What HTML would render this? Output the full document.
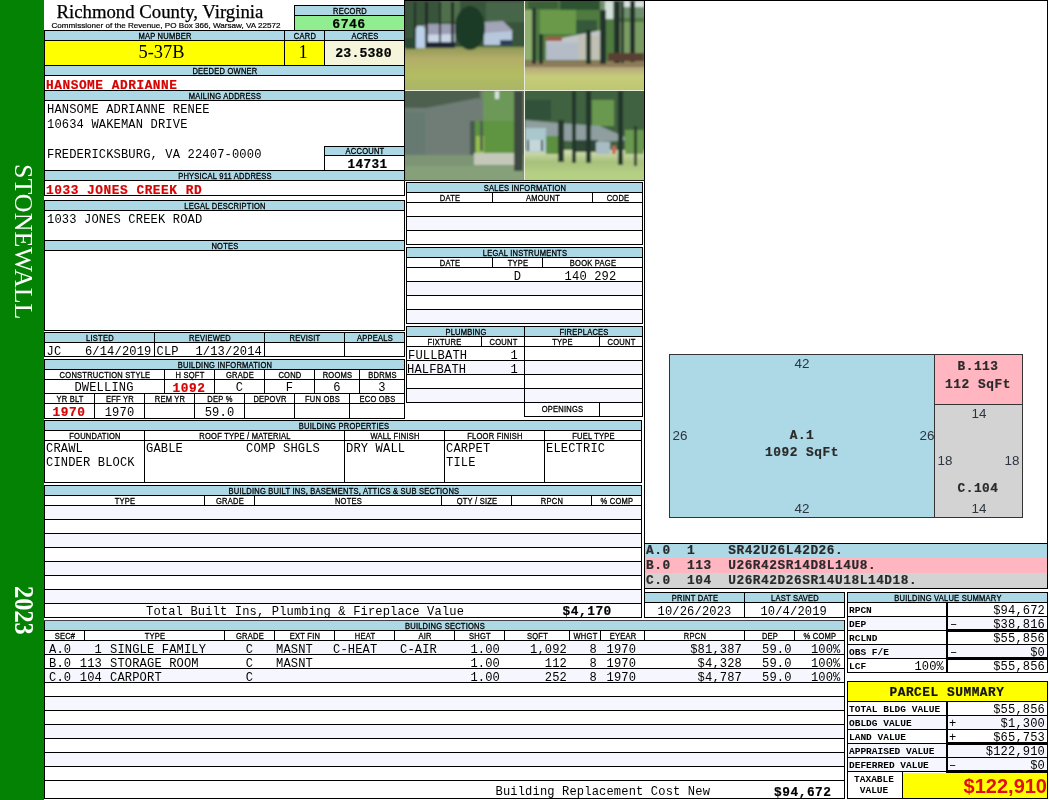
<!DOCTYPE html>
<html lang="en"><head><meta charset="utf-8"><title>Richmond County, Virginia - Property Record 6746</title>
<style>
html,body{margin:0;padding:0;background:#fff;}
#pg{position:relative;width:1050px;height:800px;overflow:hidden;background:#fff;color:#000;will-change:transform;}
.r{position:absolute;}
.t{position:absolute;white-space:nowrap;}
.mono{font-family:"Liberation Mono","DejaVu Sans Mono",monospace;}
.sans{font-family:"Liberation Sans","DejaVu Sans",sans-serif;}
.serif{font-family:"Liberation Serif","DejaVu Serif",serif;}
.vt{writing-mode:vertical-rl;font-family:"Liberation Serif","DejaVu Serif",serif;color:#fff;line-height:24px;width:24px;white-space:nowrap;}
</style></head>
<body><div id="pg">
<div class="r" style="left:0px;top:0px;width:44px;height:800px;background:#038203"></div>
<div class="r" style="left:44px;top:30px;width:1px;height:166px;background:#000"></div>
<div class="r" style="left:44px;top:200px;width:1px;height:131px;background:#000"></div>
<div class="r" style="left:44px;top:332px;width:1px;height:25px;background:#000"></div>
<div class="r" style="left:44px;top:359px;width:1px;height:60px;background:#000"></div>
<div class="r" style="left:44px;top:420px;width:1px;height:63px;background:#000"></div>
<div class="r" style="left:44px;top:485px;width:1px;height:133px;background:#000"></div>
<div class="r" style="left:44px;top:620px;width:1px;height:179px;background:#000"></div>
<div class="t vt" style="left:11px;top:163.5px;font-size:26px;">STONEWALL</div>
<div class="t vt" style="left:11px;top:586px;font-size:24.4px;font-weight:bold;transform:scaleX(1.1);transform-origin:4px 0;">2023</div>
<div class="t serif" style="top:-0.13px;font-size:18.75px;line-height:24px;height:24px;left:56.5px;-webkit-text-stroke:.25px #000;">Richmond County, Virginia</div>
<div class="t sans" style="top:19.89px;font-size:8.1px;line-height:11px;height:11px;left:51.5px;letter-spacing:0px;-webkit-text-stroke:.2px #000;">Commissioner of the Revenue, PO Box 366, Warsaw, VA 22572</div>
<div class="r" style="left:295px;top:6px;width:109px;height:9px;background:#add8e6"></div>
<div class="r" style="left:295px;top:16px;width:109px;height:14px;background:#90ee90"></div>
<div class="r" style="left:294px;top:5px;width:111px;height:1px;background:#000"></div>
<div class="r" style="left:294px;top:15px;width:111px;height:1px;background:#000"></div>
<div class="r" style="left:44px;top:30px;width:361px;height:1px;background:#000"></div>
<div class="r" style="left:294px;top:5px;width:1px;height:26px;background:#000"></div>
<div class="r" style="left:404px;top:0px;width:1px;height:181px;background:#000"></div>
<div class="t sans" style="top:5.69px;font-size:8.4px;line-height:11px;height:11px;left:274.5px;width:150px;text-align:center;letter-spacing:0.25px;transform:scaleX(.9);-webkit-text-stroke:.3px #000;">RECORD</div>
<div class="t mono" style="top:16.18px;font-size:13.2px;line-height:17px;height:17px;left:149.0px;width:400px;text-align:center;font-weight:bold;-webkit-text-stroke:.2px currentColor;letter-spacing:0.4px;">6746</div>
<div class="r" style="left:45px;top:31px;width:359px;height:9px;background:#add8e6"></div>
<div class="r" style="left:44px;top:40px;width:361px;height:1px;background:#000"></div>
<div class="r" style="left:45px;top:41px;width:279px;height:24px;background:#ffff00"></div>
<div class="r" style="left:325px;top:41px;width:79px;height:24px;background:#f5f5dc"></div>
<div class="r" style="left:44px;top:65px;width:361px;height:1px;background:#000"></div>
<div class="r" style="left:284px;top:30px;width:1px;height:36px;background:#000"></div>
<div class="r" style="left:324px;top:30px;width:1px;height:36px;background:#000"></div>
<div class="t sans" style="top:30.69px;font-size:8.4px;line-height:11px;height:11px;left:24.5px;width:280px;text-align:center;letter-spacing:0.25px;transform:scaleX(.9);-webkit-text-stroke:.3px #000;">MAP NUMBER</div>
<div class="t sans" style="top:30.69px;font-size:8.4px;line-height:11px;height:11px;left:264.5px;width:80px;text-align:center;letter-spacing:0.25px;transform:scaleX(.9);-webkit-text-stroke:.3px #000;">CARD</div>
<div class="t sans" style="top:30.69px;font-size:8.4px;line-height:11px;height:11px;left:304.5px;width:120px;text-align:center;letter-spacing:0.25px;transform:scaleX(.9);-webkit-text-stroke:.3px #000;">ACRES</div>
<div class="t serif" style="top:39.99px;font-size:18.4px;line-height:24px;height:24px;left:-38.5px;width:400px;text-align:center;">5-37B</div>
<div class="t serif" style="top:39.99px;font-size:18.4px;line-height:24px;height:24px;left:103.0px;width:400px;text-align:center;">1</div>
<div class="t mono" style="top:44.78px;font-size:13.2px;line-height:17px;height:17px;left:163.5px;width:400px;text-align:center;font-weight:bold;-webkit-text-stroke:.2px currentColor;letter-spacing:0.15px;">23.5380</div>
<div class="r" style="left:45px;top:66px;width:359px;height:9px;background:#add8e6"></div>
<div class="r" style="left:44px;top:75px;width:361px;height:1px;background:#000"></div>
<div class="r" style="left:44px;top:90px;width:361px;height:1px;background:#000"></div>
<div class="t sans" style="top:65.69px;font-size:8.4px;line-height:11px;height:11px;left:24.5px;width:400px;text-align:center;letter-spacing:0.25px;transform:scaleX(.9);-webkit-text-stroke:.3px #000;">DEEDED OWNER</div>
<div class="t mono" style="top:76.69px;font-size:12.8px;line-height:17px;height:17px;left:46px;font-weight:bold;-webkit-text-stroke:.2px currentColor;color:#d40505;letter-spacing:0.54px;">HANSOME ADRIANNE</div>
<div class="r" style="left:45px;top:91px;width:359px;height:9px;background:#add8e6"></div>
<div class="r" style="left:44px;top:100px;width:361px;height:1px;background:#000"></div>
<div class="t sans" style="top:90.69px;font-size:8.4px;line-height:11px;height:11px;left:24.5px;width:400px;text-align:center;letter-spacing:0.25px;transform:scaleX(.9);-webkit-text-stroke:.3px #000;">MAILING ADDRESS</div>
<div class="t mono" style="top:102.38px;font-size:12.1px;line-height:16px;height:16px;left:47px;letter-spacing:0.14px;">HANSOME ADRIANNE RENEE</div>
<div class="t mono" style="top:117.38px;font-size:12.1px;line-height:16px;height:16px;left:47px;letter-spacing:0.14px;">10634 WAKEMAN DRIVE</div>
<div class="t mono" style="top:147.38px;font-size:12.1px;line-height:16px;height:16px;left:47px;letter-spacing:0.14px;">FREDERICKSBURG, VA 22407-0000</div>
<div class="r" style="left:325px;top:147px;width:79px;height:8px;background:#add8e6"></div>
<div class="r" style="left:324px;top:146px;width:81px;height:1px;background:#000"></div>
<div class="r" style="left:324px;top:155px;width:81px;height:1px;background:#000"></div>
<div class="r" style="left:324px;top:146px;width:1px;height:25px;background:#000"></div>
<div class="t sans" style="top:146.19px;font-size:8.4px;line-height:11px;height:11px;left:304.5px;width:120px;text-align:center;letter-spacing:0.25px;transform:scaleX(.9);-webkit-text-stroke:.3px #000;">ACCOUNT</div>
<div class="t mono" style="top:156.12px;font-size:12.7px;line-height:17px;height:17px;left:167.5px;width:400px;text-align:center;font-weight:bold;-webkit-text-stroke:.2px currentColor;letter-spacing:0.4px;">14731</div>
<div class="r" style="left:44px;top:170px;width:361px;height:1px;background:#000"></div>
<div class="r" style="left:45px;top:171px;width:359px;height:9px;background:#add8e6"></div>
<div class="r" style="left:44px;top:180px;width:361px;height:1px;background:#000"></div>
<div class="r" style="left:44px;top:195px;width:361px;height:1px;background:#000"></div>
<div class="t sans" style="top:170.69px;font-size:8.4px;line-height:11px;height:11px;left:24.5px;width:400px;text-align:center;letter-spacing:0.25px;transform:scaleX(.9);-webkit-text-stroke:.3px #000;">PHYSICAL 911 ADDRESS</div>
<div class="t mono" style="top:181.69px;font-size:12.8px;line-height:17px;height:17px;left:46px;font-weight:bold;-webkit-text-stroke:.2px currentColor;color:#d40505;letter-spacing:0.54px;">1033 JONES CREEK RD</div>
<div class="r" style="left:404px;top:180px;width:1px;height:16px;background:#000"></div>
<div class="r" style="left:44px;top:200px;width:361px;height:1px;background:#000"></div>
<div class="r" style="left:45px;top:201px;width:359px;height:9px;background:#add8e6"></div>
<div class="r" style="left:44px;top:210px;width:361px;height:1px;background:#000"></div>
<div class="t sans" style="top:200.69px;font-size:8.4px;line-height:11px;height:11px;left:24.5px;width:400px;text-align:center;letter-spacing:0.25px;transform:scaleX(.9);-webkit-text-stroke:.3px #000;">LEGAL DESCRIPTION</div>
<div class="t mono" style="top:211.88px;font-size:12.1px;line-height:16px;height:16px;left:47px;letter-spacing:0.14px;">1033 JONES CREEK ROAD</div>
<div class="r" style="left:44px;top:240px;width:361px;height:1px;background:#000"></div>
<div class="r" style="left:45px;top:241px;width:359px;height:9px;background:#add8e6"></div>
<div class="r" style="left:44px;top:250px;width:361px;height:1px;background:#000"></div>
<div class="r" style="left:44px;top:330px;width:361px;height:1px;background:#000"></div>
<div class="t sans" style="top:240.69px;font-size:8.4px;line-height:11px;height:11px;left:24.5px;width:400px;text-align:center;letter-spacing:0.25px;transform:scaleX(.9);-webkit-text-stroke:.3px #000;">NOTES</div>
<div class="r" style="left:404px;top:200px;width:1px;height:131px;background:#000"></div>
<div class="r" style="left:44px;top:332px;width:361px;height:1px;background:#000"></div>
<div class="r" style="left:45px;top:333px;width:359px;height:9px;background:#add8e6"></div>
<div class="r" style="left:44px;top:342px;width:361px;height:1px;background:#000"></div>
<div class="r" style="left:44px;top:356px;width:361px;height:1px;background:#000"></div>
<div class="r" style="left:154px;top:332px;width:1px;height:25px;background:#000"></div>
<div class="r" style="left:264px;top:332px;width:1px;height:25px;background:#000"></div>
<div class="r" style="left:344px;top:332px;width:1px;height:25px;background:#000"></div>
<div class="r" style="left:404px;top:332px;width:1px;height:25px;background:#000"></div>
<div class="t sans" style="top:332.69px;font-size:8.4px;line-height:11px;height:11px;left:24.5px;width:150px;text-align:center;letter-spacing:0.25px;transform:scaleX(.9);-webkit-text-stroke:.3px #000;">LISTED</div>
<div class="t sans" style="top:332.69px;font-size:8.4px;line-height:11px;height:11px;left:134.5px;width:150px;text-align:center;letter-spacing:0.25px;transform:scaleX(.9);-webkit-text-stroke:.3px #000;">REVIEWED</div>
<div class="t sans" style="top:332.69px;font-size:8.4px;line-height:11px;height:11px;left:244.5px;width:120px;text-align:center;letter-spacing:0.25px;transform:scaleX(.9);-webkit-text-stroke:.3px #000;">REVISIT</div>
<div class="t sans" style="top:332.69px;font-size:8.4px;line-height:11px;height:11px;left:324.5px;width:100px;text-align:center;letter-spacing:0.25px;transform:scaleX(.9);-webkit-text-stroke:.3px #000;">APPEALS</div>
<div class="t mono" style="top:343.68px;font-size:12.1px;line-height:16px;height:16px;left:46.5px;letter-spacing:0.14px;">JC</div>
<div class="t mono" style="top:343.68px;font-size:12.1px;line-height:16px;height:16px;left:-248.5px;width:400px;text-align:right;letter-spacing:0.14px;">6/14/2019</div>
<div class="t mono" style="top:343.68px;font-size:12.1px;line-height:16px;height:16px;left:156.5px;letter-spacing:0.14px;">CLP</div>
<div class="t mono" style="top:343.68px;font-size:12.1px;line-height:16px;height:16px;left:-138px;width:400px;text-align:right;letter-spacing:0.14px;">1/13/2014</div>
<div class="r" style="left:44px;top:359px;width:361px;height:1px;background:#000"></div>
<div class="r" style="left:45px;top:360px;width:359px;height:9px;background:#add8e6"></div>
<div class="r" style="left:44px;top:369px;width:361px;height:1px;background:#000"></div>
<div class="r" style="left:44px;top:379px;width:361px;height:1px;background:#000"></div>
<div class="r" style="left:44px;top:393px;width:361px;height:1px;background:#000"></div>
<div class="r" style="left:44px;top:403px;width:361px;height:1px;background:#000"></div>
<div class="r" style="left:44px;top:418px;width:361px;height:1px;background:#000"></div>
<div class="r" style="left:404px;top:359px;width:1px;height:60px;background:#000"></div>
<div class="t sans" style="top:359.69px;font-size:8.4px;line-height:11px;height:11px;left:24.5px;width:400px;text-align:center;letter-spacing:0.25px;transform:scaleX(.9);-webkit-text-stroke:.3px #000;">BUILDING INFORMATION</div>
<div class="r" style="left:164px;top:369px;width:1px;height:25px;background:#000"></div>
<div class="r" style="left:214px;top:369px;width:1px;height:25px;background:#000"></div>
<div class="r" style="left:264px;top:369px;width:1px;height:25px;background:#000"></div>
<div class="r" style="left:314px;top:369px;width:1px;height:25px;background:#000"></div>
<div class="r" style="left:359px;top:369px;width:1px;height:25px;background:#000"></div>
<div class="t sans" style="top:369.69px;font-size:8.4px;line-height:11px;height:11px;left:24.5px;width:160px;text-align:center;letter-spacing:0.25px;transform:scaleX(.9);-webkit-text-stroke:.3px #000;">CONSTRUCTION STYLE</div>
<div class="t sans" style="top:369.69px;font-size:8.4px;line-height:11px;height:11px;left:144.5px;width:90px;text-align:center;letter-spacing:0.25px;transform:scaleX(.9);-webkit-text-stroke:.3px #000;">H SQFT</div>
<div class="t sans" style="top:369.69px;font-size:8.4px;line-height:11px;height:11px;left:194.5px;width:90px;text-align:center;letter-spacing:0.25px;transform:scaleX(.9);-webkit-text-stroke:.3px #000;">GRADE</div>
<div class="t sans" style="top:369.69px;font-size:8.4px;line-height:11px;height:11px;left:244.5px;width:90px;text-align:center;letter-spacing:0.25px;transform:scaleX(.9);-webkit-text-stroke:.3px #000;">COND</div>
<div class="t sans" style="top:369.69px;font-size:8.4px;line-height:11px;height:11px;left:294.5px;width:85px;text-align:center;letter-spacing:0.25px;transform:scaleX(.9);-webkit-text-stroke:.3px #000;">ROOMS</div>
<div class="t sans" style="top:369.69px;font-size:8.4px;line-height:11px;height:11px;left:339.5px;width:85px;text-align:center;letter-spacing:0.25px;transform:scaleX(.9);-webkit-text-stroke:.3px #000;">BDRMS</div>
<div class="t mono" style="top:380.38px;font-size:12.1px;line-height:16px;height:16px;left:-96.0px;width:400px;text-align:center;letter-spacing:0.14px;">DWELLING</div>
<div class="t mono" style="top:379.69px;font-size:12.8px;line-height:17px;height:17px;left:-11.0px;width:400px;text-align:center;font-weight:bold;-webkit-text-stroke:.2px currentColor;color:#d40505;letter-spacing:0.54px;">1092</div>
<div class="t mono" style="top:380.38px;font-size:12.1px;line-height:16px;height:16px;left:39.5px;width:400px;text-align:center;letter-spacing:0.14px;">C</div>
<div class="t mono" style="top:380.38px;font-size:12.1px;line-height:16px;height:16px;left:89.5px;width:400px;text-align:center;letter-spacing:0.14px;">F</div>
<div class="t mono" style="top:380.38px;font-size:12.1px;line-height:16px;height:16px;left:137.0px;width:400px;text-align:center;letter-spacing:0.14px;">6</div>
<div class="t mono" style="top:380.38px;font-size:12.1px;line-height:16px;height:16px;left:182.0px;width:400px;text-align:center;letter-spacing:0.14px;">3</div>
<div class="r" style="left:94px;top:393px;width:1px;height:26px;background:#000"></div>
<div class="r" style="left:144px;top:393px;width:1px;height:26px;background:#000"></div>
<div class="r" style="left:194px;top:393px;width:1px;height:26px;background:#000"></div>
<div class="r" style="left:244px;top:393px;width:1px;height:26px;background:#000"></div>
<div class="r" style="left:294px;top:393px;width:1px;height:26px;background:#000"></div>
<div class="r" style="left:349px;top:393px;width:1px;height:26px;background:#000"></div>
<div class="t sans" style="top:393.69px;font-size:8.4px;line-height:11px;height:11px;left:24.5px;width:90px;text-align:center;letter-spacing:0.25px;transform:scaleX(.9);-webkit-text-stroke:.3px #000;">YR BLT</div>
<div class="t sans" style="top:393.69px;font-size:8.4px;line-height:11px;height:11px;left:74.5px;width:90px;text-align:center;letter-spacing:0.25px;transform:scaleX(.9);-webkit-text-stroke:.3px #000;">EFF YR</div>
<div class="t sans" style="top:393.69px;font-size:8.4px;line-height:11px;height:11px;left:124.5px;width:90px;text-align:center;letter-spacing:0.25px;transform:scaleX(.9);-webkit-text-stroke:.3px #000;">REM YR</div>
<div class="t sans" style="top:393.69px;font-size:8.4px;line-height:11px;height:11px;left:174.5px;width:90px;text-align:center;letter-spacing:0.25px;transform:scaleX(.9);-webkit-text-stroke:.3px #000;">DEP %</div>
<div class="t sans" style="top:393.69px;font-size:8.4px;line-height:11px;height:11px;left:224.5px;width:90px;text-align:center;letter-spacing:0.25px;transform:scaleX(.9);-webkit-text-stroke:.3px #000;">DEPOVR</div>
<div class="t sans" style="top:393.69px;font-size:8.4px;line-height:11px;height:11px;left:274.5px;width:95px;text-align:center;letter-spacing:0.25px;transform:scaleX(.9);-webkit-text-stroke:.3px #000;">FUN OBS</div>
<div class="t sans" style="top:393.69px;font-size:8.4px;line-height:11px;height:11px;left:329.5px;width:95px;text-align:center;letter-spacing:0.25px;transform:scaleX(.9);-webkit-text-stroke:.3px #000;">ECO OBS</div>
<div class="t mono" style="top:404.19px;font-size:12.8px;line-height:17px;height:17px;left:-131.0px;width:400px;text-align:center;font-weight:bold;-webkit-text-stroke:.2px currentColor;color:#d40505;letter-spacing:0.54px;">1970</div>
<div class="t mono" style="top:404.88px;font-size:12.1px;line-height:16px;height:16px;left:-80.5px;width:400px;text-align:center;letter-spacing:0.14px;">1970</div>
<div class="t mono" style="top:404.88px;font-size:12.1px;line-height:16px;height:16px;left:19.5px;width:400px;text-align:center;letter-spacing:0.14px;">59.0</div>
<div class="r" style="left:44px;top:420px;width:598px;height:1px;background:#000"></div>
<div class="r" style="left:45px;top:421px;width:596px;height:9px;background:#add8e6"></div>
<div class="r" style="left:44px;top:430px;width:598px;height:1px;background:#000"></div>
<div class="r" style="left:44px;top:440px;width:598px;height:1px;background:#000"></div>
<div class="r" style="left:44px;top:482px;width:598px;height:1px;background:#000"></div>
<div class="r" style="left:144px;top:430px;width:1px;height:53px;background:#000"></div>
<div class="r" style="left:344px;top:430px;width:1px;height:53px;background:#000"></div>
<div class="r" style="left:444px;top:430px;width:1px;height:53px;background:#000"></div>
<div class="r" style="left:544px;top:430px;width:1px;height:53px;background:#000"></div>
<div class="r" style="left:641px;top:420px;width:1px;height:63px;background:#000"></div>
<div class="t sans" style="top:421.19px;font-size:8.4px;line-height:11px;height:11px;left:24.5px;width:638px;text-align:center;letter-spacing:0.25px;transform:scaleX(.9);-webkit-text-stroke:.3px #000;">BUILDING PROPERTIES</div>
<div class="t sans" style="top:430.69px;font-size:8.4px;line-height:11px;height:11px;left:24.5px;width:140px;text-align:center;letter-spacing:0.25px;transform:scaleX(.9);-webkit-text-stroke:.3px #000;">FOUNDATION</div>
<div class="t sans" style="top:430.69px;font-size:8.4px;line-height:11px;height:11px;left:124.5px;width:240px;text-align:center;letter-spacing:0.25px;transform:scaleX(.9);-webkit-text-stroke:.3px #000;">ROOF TYPE / MATERIAL</div>
<div class="t sans" style="top:430.69px;font-size:8.4px;line-height:11px;height:11px;left:324.5px;width:140px;text-align:center;letter-spacing:0.25px;transform:scaleX(.9);-webkit-text-stroke:.3px #000;">WALL FINISH</div>
<div class="t sans" style="top:430.69px;font-size:8.4px;line-height:11px;height:11px;left:424.5px;width:140px;text-align:center;letter-spacing:0.25px;transform:scaleX(.9);-webkit-text-stroke:.3px #000;">FLOOR FINISH</div>
<div class="t sans" style="top:430.69px;font-size:8.4px;line-height:11px;height:11px;left:524.5px;width:137px;text-align:center;letter-spacing:0.25px;transform:scaleX(.9);-webkit-text-stroke:.3px #000;">FUEL TYPE</div>
<div class="t mono" style="top:440.88px;font-size:12.1px;line-height:16px;height:16px;left:46px;letter-spacing:0.14px;">CRAWL</div>
<div class="t mono" style="top:454.88px;font-size:12.1px;line-height:16px;height:16px;left:46px;letter-spacing:0.14px;">CINDER BLOCK</div>
<div class="t mono" style="top:440.88px;font-size:12.1px;line-height:16px;height:16px;left:146px;letter-spacing:0.14px;">GABLE</div>
<div class="t mono" style="top:440.88px;font-size:12.1px;line-height:16px;height:16px;left:246px;letter-spacing:0.14px;">COMP SHGLS</div>
<div class="t mono" style="top:440.88px;font-size:12.1px;line-height:16px;height:16px;left:346px;letter-spacing:0.14px;">DRY WALL</div>
<div class="t mono" style="top:440.88px;font-size:12.1px;line-height:16px;height:16px;left:446px;letter-spacing:0.14px;">CARPET</div>
<div class="t mono" style="top:454.88px;font-size:12.1px;line-height:16px;height:16px;left:446px;letter-spacing:0.14px;">TILE</div>
<div class="t mono" style="top:440.88px;font-size:12.1px;line-height:16px;height:16px;left:546px;letter-spacing:0.14px;">ELECTRIC</div>
<div class="r" style="left:44px;top:485px;width:598px;height:1px;background:#000"></div>
<div class="r" style="left:45px;top:486px;width:596px;height:9px;background:#add8e6"></div>
<div class="r" style="left:44px;top:495px;width:598px;height:1px;background:#000"></div>
<div class="r" style="left:44px;top:505px;width:598px;height:1px;background:#000"></div>
<div class="t sans" style="top:485.69px;font-size:8.4px;line-height:11px;height:11px;left:24.5px;width:638px;text-align:center;letter-spacing:0.25px;transform:scaleX(.9);-webkit-text-stroke:.3px #000;">BUILDING BUILT INS, BASEMENTS, ATTICS &amp; SUB SECTIONS</div>
<div class="r" style="left:204px;top:495px;width:1px;height:11px;background:#000"></div>
<div class="r" style="left:254px;top:495px;width:1px;height:11px;background:#000"></div>
<div class="r" style="left:441px;top:495px;width:1px;height:11px;background:#000"></div>
<div class="r" style="left:511px;top:495px;width:1px;height:11px;background:#000"></div>
<div class="r" style="left:591px;top:495px;width:1px;height:11px;background:#000"></div>
<div class="t sans" style="top:495.69px;font-size:8.4px;line-height:11px;height:11px;left:24.5px;width:200px;text-align:center;letter-spacing:0.25px;transform:scaleX(.9);-webkit-text-stroke:.3px #000;">TYPE</div>
<div class="t sans" style="top:495.69px;font-size:8.4px;line-height:11px;height:11px;left:184.5px;width:90px;text-align:center;letter-spacing:0.25px;transform:scaleX(.9);-webkit-text-stroke:.3px #000;">GRADE</div>
<div class="t sans" style="top:495.69px;font-size:8.4px;line-height:11px;height:11px;left:234.5px;width:227px;text-align:center;letter-spacing:0.25px;transform:scaleX(.9);-webkit-text-stroke:.3px #000;">NOTES</div>
<div class="t sans" style="top:495.69px;font-size:8.4px;line-height:11px;height:11px;left:421.5px;width:110px;text-align:center;letter-spacing:0.25px;transform:scaleX(.9);-webkit-text-stroke:.3px #000;">QTY / SIZE</div>
<div class="t sans" style="top:495.69px;font-size:8.4px;line-height:11px;height:11px;left:491.5px;width:120px;text-align:center;letter-spacing:0.25px;transform:scaleX(.9);-webkit-text-stroke:.3px #000;">RPCN</div>
<div class="t sans" style="top:495.69px;font-size:8.4px;line-height:11px;height:11px;left:571.5px;width:90px;text-align:center;letter-spacing:0.25px;transform:scaleX(.9);-webkit-text-stroke:.3px #000;">% COMP</div>
<div class="r" style="left:45px;top:506px;width:596px;height:13px;background:#f6f6fe"></div>
<div class="r" style="left:44px;top:519px;width:598px;height:1px;background:#000"></div>
<div class="r" style="left:44px;top:533px;width:598px;height:1px;background:#000"></div>
<div class="r" style="left:45px;top:534px;width:596px;height:13px;background:#f6f6fe"></div>
<div class="r" style="left:44px;top:547px;width:598px;height:1px;background:#000"></div>
<div class="r" style="left:44px;top:561px;width:598px;height:1px;background:#000"></div>
<div class="r" style="left:45px;top:562px;width:596px;height:13px;background:#f6f6fe"></div>
<div class="r" style="left:44px;top:575px;width:598px;height:1px;background:#000"></div>
<div class="r" style="left:44px;top:589px;width:598px;height:1px;background:#000"></div>
<div class="r" style="left:45px;top:590px;width:596px;height:13px;background:#f6f6fe"></div>
<div class="r" style="left:44px;top:603px;width:598px;height:1px;background:#000"></div>
<div class="r" style="left:44px;top:617px;width:598px;height:1px;background:#000"></div>
<div class="r" style="left:641px;top:485px;width:1px;height:133px;background:#000"></div>
<div class="t mono" style="top:604.18px;font-size:12.1px;line-height:16px;height:16px;left:146px;letter-spacing:0.14px;">Total Built Ins, Plumbing &amp; Fireplace Value</div>
<div class="t mono" style="top:603.29px;font-size:12.8px;line-height:17px;height:17px;left:562.5px;font-weight:bold;-webkit-text-stroke:.2px currentColor;letter-spacing:0.54px;">$4,170</div>
<div class="r" style="left:44px;top:620px;width:801px;height:1px;background:#444"></div>
<div class="r" style="left:45px;top:621px;width:799px;height:9px;background:#add8e6"></div>
<div class="r" style="left:44px;top:630px;width:801px;height:1px;background:#000"></div>
<div class="r" style="left:44px;top:640px;width:801px;height:1px;background:#000"></div>
<div class="t sans" style="top:620.69px;font-size:8.4px;line-height:11px;height:11px;left:24.5px;width:840px;text-align:center;letter-spacing:0.25px;transform:scaleX(.9);-webkit-text-stroke:.3px #000;">BUILDING SECTIONS</div>
<div class="r" style="left:84px;top:630px;width:1px;height:11px;background:#000"></div>
<div class="r" style="left:224px;top:630px;width:1px;height:11px;background:#000"></div>
<div class="r" style="left:274px;top:630px;width:1px;height:11px;background:#000"></div>
<div class="r" style="left:334px;top:630px;width:1px;height:11px;background:#000"></div>
<div class="r" style="left:394px;top:630px;width:1px;height:11px;background:#000"></div>
<div class="r" style="left:454px;top:630px;width:1px;height:11px;background:#000"></div>
<div class="r" style="left:504px;top:630px;width:1px;height:11px;background:#000"></div>
<div class="r" style="left:569px;top:630px;width:1px;height:11px;background:#000"></div>
<div class="r" style="left:600px;top:630px;width:1px;height:11px;background:#000"></div>
<div class="r" style="left:644px;top:630px;width:1px;height:11px;background:#000"></div>
<div class="r" style="left:744px;top:630px;width:1px;height:11px;background:#000"></div>
<div class="r" style="left:794px;top:630px;width:1px;height:11px;background:#000"></div>
<div class="t sans" style="top:630.69px;font-size:8.4px;line-height:11px;height:11px;left:24.5px;width:80px;text-align:center;letter-spacing:0.25px;transform:scaleX(.9);-webkit-text-stroke:.3px #000;">SEC#</div>
<div class="t sans" style="top:630.69px;font-size:8.4px;line-height:11px;height:11px;left:64.5px;width:180px;text-align:center;letter-spacing:0.25px;transform:scaleX(.9);-webkit-text-stroke:.3px #000;">TYPE</div>
<div class="t sans" style="top:630.69px;font-size:8.4px;line-height:11px;height:11px;left:204.5px;width:90px;text-align:center;letter-spacing:0.25px;transform:scaleX(.9);-webkit-text-stroke:.3px #000;">GRADE</div>
<div class="t sans" style="top:630.69px;font-size:8.4px;line-height:11px;height:11px;left:254.5px;width:100px;text-align:center;letter-spacing:0.25px;transform:scaleX(.9);-webkit-text-stroke:.3px #000;">EXT FIN</div>
<div class="t sans" style="top:630.69px;font-size:8.4px;line-height:11px;height:11px;left:314.5px;width:100px;text-align:center;letter-spacing:0.25px;transform:scaleX(.9);-webkit-text-stroke:.3px #000;">HEAT</div>
<div class="t sans" style="top:630.69px;font-size:8.4px;line-height:11px;height:11px;left:374.5px;width:100px;text-align:center;letter-spacing:0.25px;transform:scaleX(.9);-webkit-text-stroke:.3px #000;">AIR</div>
<div class="t sans" style="top:630.69px;font-size:8.4px;line-height:11px;height:11px;left:434.5px;width:90px;text-align:center;letter-spacing:0.25px;transform:scaleX(.9);-webkit-text-stroke:.3px #000;">SHGT</div>
<div class="t sans" style="top:630.69px;font-size:8.4px;line-height:11px;height:11px;left:484.5px;width:105px;text-align:center;letter-spacing:0.25px;transform:scaleX(.9);-webkit-text-stroke:.3px #000;">SQFT</div>
<div class="t sans" style="top:630.69px;font-size:8.4px;line-height:11px;height:11px;left:549.5px;width:71px;text-align:center;letter-spacing:0.25px;transform:scaleX(.9);-webkit-text-stroke:.3px #000;">WHGT</div>
<div class="t sans" style="top:630.69px;font-size:8.4px;line-height:11px;height:11px;left:580.5px;width:84px;text-align:center;letter-spacing:0.25px;transform:scaleX(.9);-webkit-text-stroke:.3px #000;">EYEAR</div>
<div class="t sans" style="top:630.69px;font-size:8.4px;line-height:11px;height:11px;left:624.5px;width:140px;text-align:center;letter-spacing:0.25px;transform:scaleX(.9);-webkit-text-stroke:.3px #000;">RPCN</div>
<div class="t sans" style="top:630.69px;font-size:8.4px;line-height:11px;height:11px;left:724.5px;width:90px;text-align:center;letter-spacing:0.25px;transform:scaleX(.9);-webkit-text-stroke:.3px #000;">DEP</div>
<div class="t sans" style="top:630.69px;font-size:8.4px;line-height:11px;height:11px;left:774.5px;width:90px;text-align:center;letter-spacing:0.25px;transform:scaleX(.9);-webkit-text-stroke:.3px #000;">% COMP</div>
<div class="r" style="left:45px;top:641px;width:799px;height:13px;background:#f6f6fe"></div>
<div class="r" style="left:44px;top:654px;width:801px;height:1px;background:#000"></div>
<div class="r" style="left:44px;top:668px;width:801px;height:1px;background:#000"></div>
<div class="r" style="left:45px;top:669px;width:799px;height:13px;background:#f6f6fe"></div>
<div class="r" style="left:44px;top:682px;width:801px;height:1px;background:#000"></div>
<div class="r" style="left:44px;top:696px;width:801px;height:1px;background:#000"></div>
<div class="r" style="left:45px;top:697px;width:799px;height:13px;background:#f6f6fe"></div>
<div class="r" style="left:44px;top:710px;width:801px;height:1px;background:#000"></div>
<div class="r" style="left:44px;top:724px;width:801px;height:1px;background:#000"></div>
<div class="r" style="left:45px;top:725px;width:799px;height:13px;background:#f6f6fe"></div>
<div class="r" style="left:44px;top:738px;width:801px;height:1px;background:#000"></div>
<div class="r" style="left:44px;top:752px;width:801px;height:1px;background:#000"></div>
<div class="r" style="left:45px;top:753px;width:799px;height:13px;background:#f6f6fe"></div>
<div class="r" style="left:44px;top:766px;width:801px;height:1px;background:#000"></div>
<div class="r" style="left:44px;top:780px;width:801px;height:1px;background:#000"></div>
<div class="r" style="left:44px;top:798px;width:801px;height:1px;background:#000"></div>
<div class="r" style="left:844px;top:620px;width:1px;height:179px;background:#000"></div>
<div class="t mono" style="top:641.68px;font-size:12.1px;line-height:16px;height:16px;left:49px;letter-spacing:0.14px;">A.0</div>
<div class="t mono" style="top:641.68px;font-size:12.1px;line-height:16px;height:16px;left:-298px;width:400px;text-align:right;letter-spacing:0.14px;">1</div>
<div class="t mono" style="top:641.68px;font-size:12.1px;line-height:16px;height:16px;left:110px;letter-spacing:0.14px;">SINGLE FAMILY</div>
<div class="t mono" style="top:641.68px;font-size:12.1px;line-height:16px;height:16px;left:49.5px;width:400px;text-align:center;letter-spacing:0.14px;">C</div>
<div class="t mono" style="top:641.68px;font-size:12.1px;line-height:16px;height:16px;left:276px;letter-spacing:0.14px;">MASNT</div>
<div class="t mono" style="top:641.68px;font-size:12.1px;line-height:16px;height:16px;left:333px;letter-spacing:0.14px;">C-HEAT</div>
<div class="t mono" style="top:641.68px;font-size:12.1px;line-height:16px;height:16px;left:400px;letter-spacing:0.14px;">C-AIR</div>
<div class="t mono" style="top:641.68px;font-size:12.1px;line-height:16px;height:16px;left:100px;width:400px;text-align:right;letter-spacing:0.14px;">1.00</div>
<div class="t mono" style="top:641.68px;font-size:12.1px;line-height:16px;height:16px;left:167px;width:400px;text-align:right;letter-spacing:0.14px;">1,092</div>
<div class="t mono" style="top:641.68px;font-size:12.1px;line-height:16px;height:16px;left:197px;width:400px;text-align:right;letter-spacing:0.14px;">8</div>
<div class="t mono" style="top:641.68px;font-size:12.1px;line-height:16px;height:16px;left:606.5px;letter-spacing:0.14px;">1970</div>
<div class="t mono" style="top:641.68px;font-size:12.1px;line-height:16px;height:16px;left:342px;width:400px;text-align:right;letter-spacing:0.14px;">$81,387</div>
<div class="t mono" style="top:641.68px;font-size:12.1px;line-height:16px;height:16px;left:762px;letter-spacing:0.14px;">59.0</div>
<div class="t mono" style="top:641.68px;font-size:12.1px;line-height:16px;height:16px;left:440.5px;width:400px;text-align:right;letter-spacing:0.14px;">100%</div>
<div class="t mono" style="top:655.68px;font-size:12.1px;line-height:16px;height:16px;left:49px;letter-spacing:0.14px;">B.0</div>
<div class="t mono" style="top:655.68px;font-size:12.1px;line-height:16px;height:16px;left:-298px;width:400px;text-align:right;letter-spacing:0.14px;">113</div>
<div class="t mono" style="top:655.68px;font-size:12.1px;line-height:16px;height:16px;left:110px;letter-spacing:0.14px;">STORAGE ROOM</div>
<div class="t mono" style="top:655.68px;font-size:12.1px;line-height:16px;height:16px;left:49.5px;width:400px;text-align:center;letter-spacing:0.14px;">C</div>
<div class="t mono" style="top:655.68px;font-size:12.1px;line-height:16px;height:16px;left:276px;letter-spacing:0.14px;">MASNT</div>
<div class="t mono" style="top:655.68px;font-size:12.1px;line-height:16px;height:16px;left:333px;letter-spacing:0.14px;"></div>
<div class="t mono" style="top:655.68px;font-size:12.1px;line-height:16px;height:16px;left:400px;letter-spacing:0.14px;"></div>
<div class="t mono" style="top:655.68px;font-size:12.1px;line-height:16px;height:16px;left:100px;width:400px;text-align:right;letter-spacing:0.14px;">1.00</div>
<div class="t mono" style="top:655.68px;font-size:12.1px;line-height:16px;height:16px;left:167px;width:400px;text-align:right;letter-spacing:0.14px;">112</div>
<div class="t mono" style="top:655.68px;font-size:12.1px;line-height:16px;height:16px;left:197px;width:400px;text-align:right;letter-spacing:0.14px;">8</div>
<div class="t mono" style="top:655.68px;font-size:12.1px;line-height:16px;height:16px;left:606.5px;letter-spacing:0.14px;">1970</div>
<div class="t mono" style="top:655.68px;font-size:12.1px;line-height:16px;height:16px;left:342px;width:400px;text-align:right;letter-spacing:0.14px;">$4,328</div>
<div class="t mono" style="top:655.68px;font-size:12.1px;line-height:16px;height:16px;left:762px;letter-spacing:0.14px;">59.0</div>
<div class="t mono" style="top:655.68px;font-size:12.1px;line-height:16px;height:16px;left:440.5px;width:400px;text-align:right;letter-spacing:0.14px;">100%</div>
<div class="t mono" style="top:669.68px;font-size:12.1px;line-height:16px;height:16px;left:49px;letter-spacing:0.14px;">C.0</div>
<div class="t mono" style="top:669.68px;font-size:12.1px;line-height:16px;height:16px;left:-298px;width:400px;text-align:right;letter-spacing:0.14px;">104</div>
<div class="t mono" style="top:669.68px;font-size:12.1px;line-height:16px;height:16px;left:110px;letter-spacing:0.14px;">CARPORT</div>
<div class="t mono" style="top:669.68px;font-size:12.1px;line-height:16px;height:16px;left:49.5px;width:400px;text-align:center;letter-spacing:0.14px;">C</div>
<div class="t mono" style="top:669.68px;font-size:12.1px;line-height:16px;height:16px;left:276px;letter-spacing:0.14px;"></div>
<div class="t mono" style="top:669.68px;font-size:12.1px;line-height:16px;height:16px;left:333px;letter-spacing:0.14px;"></div>
<div class="t mono" style="top:669.68px;font-size:12.1px;line-height:16px;height:16px;left:400px;letter-spacing:0.14px;"></div>
<div class="t mono" style="top:669.68px;font-size:12.1px;line-height:16px;height:16px;left:100px;width:400px;text-align:right;letter-spacing:0.14px;">1.00</div>
<div class="t mono" style="top:669.68px;font-size:12.1px;line-height:16px;height:16px;left:167px;width:400px;text-align:right;letter-spacing:0.14px;">252</div>
<div class="t mono" style="top:669.68px;font-size:12.1px;line-height:16px;height:16px;left:197px;width:400px;text-align:right;letter-spacing:0.14px;">8</div>
<div class="t mono" style="top:669.68px;font-size:12.1px;line-height:16px;height:16px;left:606.5px;letter-spacing:0.14px;">1970</div>
<div class="t mono" style="top:669.68px;font-size:12.1px;line-height:16px;height:16px;left:342px;width:400px;text-align:right;letter-spacing:0.14px;">$4,787</div>
<div class="t mono" style="top:669.68px;font-size:12.1px;line-height:16px;height:16px;left:762px;letter-spacing:0.14px;">59.0</div>
<div class="t mono" style="top:669.68px;font-size:12.1px;line-height:16px;height:16px;left:440.5px;width:400px;text-align:right;letter-spacing:0.14px;">100%</div>
<div class="t mono" style="top:784.38px;font-size:12.1px;line-height:16px;height:16px;left:495.5px;letter-spacing:0.14px;">Building Replacement Cost New</div>
<div class="t mono" style="top:783.69px;font-size:12.8px;line-height:17px;height:17px;left:774px;font-weight:bold;-webkit-text-stroke:.2px currentColor;letter-spacing:0.54px;">$94,672</div>
<div class="r" style="left:406px;top:182px;width:237px;height:1px;background:#000"></div>
<div class="r" style="left:407px;top:183px;width:235px;height:9px;background:#add8e6"></div>
<div class="r" style="left:406px;top:192px;width:237px;height:1px;background:#000"></div>
<div class="r" style="left:406px;top:202px;width:237px;height:1px;background:#000"></div>
<div class="t sans" style="top:182.69px;font-size:8.4px;line-height:11px;height:11px;left:386.5px;width:276px;text-align:center;letter-spacing:0.25px;transform:scaleX(.9);-webkit-text-stroke:.3px #000;">SALES INFORMATION</div>
<div class="r" style="left:492px;top:192px;width:1px;height:11px;background:#000"></div>
<div class="r" style="left:592px;top:192px;width:1px;height:11px;background:#000"></div>
<div class="t sans" style="top:192.69px;font-size:8.4px;line-height:11px;height:11px;left:386.5px;width:126px;text-align:center;letter-spacing:0.25px;transform:scaleX(.9);-webkit-text-stroke:.3px #000;">DATE</div>
<div class="t sans" style="top:192.69px;font-size:8.4px;line-height:11px;height:11px;left:472.5px;width:140px;text-align:center;letter-spacing:0.25px;transform:scaleX(.9);-webkit-text-stroke:.3px #000;">AMOUNT</div>
<div class="t sans" style="top:192.69px;font-size:8.4px;line-height:11px;height:11px;left:572.5px;width:90px;text-align:center;letter-spacing:0.25px;transform:scaleX(.9);-webkit-text-stroke:.3px #000;">CODE</div>
<div class="r" style="left:406px;top:216px;width:237px;height:1px;background:#000"></div>
<div class="r" style="left:407px;top:217px;width:235px;height:13px;background:#f6f6fe"></div>
<div class="r" style="left:406px;top:230px;width:237px;height:1px;background:#000"></div>
<div class="r" style="left:406px;top:244px;width:237px;height:1px;background:#000"></div>
<div class="r" style="left:406px;top:182px;width:1px;height:63px;background:#000"></div>
<div class="r" style="left:642px;top:182px;width:1px;height:63px;background:#000"></div>
<div class="r" style="left:406px;top:247px;width:237px;height:1px;background:#000"></div>
<div class="r" style="left:407px;top:248px;width:235px;height:9px;background:#add8e6"></div>
<div class="r" style="left:406px;top:257px;width:237px;height:1px;background:#000"></div>
<div class="r" style="left:406px;top:267px;width:237px;height:1px;background:#000"></div>
<div class="t sans" style="top:247.69px;font-size:8.4px;line-height:11px;height:11px;left:386.5px;width:276px;text-align:center;letter-spacing:0.25px;transform:scaleX(.9);-webkit-text-stroke:.3px #000;">LEGAL INSTRUMENTS</div>
<div class="r" style="left:492px;top:257px;width:1px;height:11px;background:#000"></div>
<div class="r" style="left:542px;top:257px;width:1px;height:11px;background:#000"></div>
<div class="t sans" style="top:257.69px;font-size:8.4px;line-height:11px;height:11px;left:386.5px;width:126px;text-align:center;letter-spacing:0.25px;transform:scaleX(.9);-webkit-text-stroke:.3px #000;">DATE</div>
<div class="t sans" style="top:257.69px;font-size:8.4px;line-height:11px;height:11px;left:472.5px;width:90px;text-align:center;letter-spacing:0.25px;transform:scaleX(.9);-webkit-text-stroke:.3px #000;">TYPE</div>
<div class="t sans" style="top:257.69px;font-size:8.4px;line-height:11px;height:11px;left:522.5px;width:140px;text-align:center;letter-spacing:0.25px;transform:scaleX(.9);-webkit-text-stroke:.3px #000;">BOOK PAGE</div>
<div class="r" style="left:406px;top:281px;width:237px;height:1px;background:#000"></div>
<div class="r" style="left:407px;top:282px;width:235px;height:13px;background:#f6f6fe"></div>
<div class="r" style="left:406px;top:295px;width:237px;height:1px;background:#000"></div>
<div class="r" style="left:406px;top:309px;width:237px;height:1px;background:#000"></div>
<div class="r" style="left:407px;top:310px;width:235px;height:13px;background:#f6f6fe"></div>
<div class="r" style="left:406px;top:323px;width:237px;height:1px;background:#000"></div>
<div class="r" style="left:406px;top:247px;width:1px;height:77px;background:#000"></div>
<div class="r" style="left:642px;top:247px;width:1px;height:77px;background:#000"></div>
<div class="t mono" style="top:269.18px;font-size:12.1px;line-height:16px;height:16px;left:317.5px;width:400px;text-align:center;letter-spacing:0.14px;">D</div>
<div class="t mono" style="top:269.18px;font-size:12.1px;line-height:16px;height:16px;left:390.5px;width:400px;text-align:center;letter-spacing:0.14px;">140 292</div>
<div class="r" style="left:406px;top:326px;width:237px;height:1px;background:#000"></div>
<div class="r" style="left:407px;top:327px;width:235px;height:9px;background:#add8e6"></div>
<div class="r" style="left:406px;top:336px;width:237px;height:1px;background:#000"></div>
<div class="r" style="left:406px;top:346px;width:237px;height:1px;background:#000"></div>
<div class="t sans" style="top:326.69px;font-size:8.4px;line-height:11px;height:11px;left:386.5px;width:158px;text-align:center;letter-spacing:0.25px;transform:scaleX(.9);-webkit-text-stroke:.3px #000;">PLUMBING</div>
<div class="t sans" style="top:326.69px;font-size:8.4px;line-height:11px;height:11px;left:504.5px;width:158px;text-align:center;letter-spacing:0.25px;transform:scaleX(.9);-webkit-text-stroke:.3px #000;">FIREPLACES</div>
<div class="r" style="left:524px;top:326px;width:1px;height:91px;background:#000"></div>
<div class="r" style="left:481px;top:336px;width:1px;height:11px;background:#000"></div>
<div class="r" style="left:599px;top:336px;width:1px;height:11px;background:#000"></div>
<div class="t sans" style="top:336.69px;font-size:8.4px;line-height:11px;height:11px;left:386.5px;width:115px;text-align:center;letter-spacing:0.25px;transform:scaleX(.9);-webkit-text-stroke:.3px #000;">FIXTURE</div>
<div class="t sans" style="top:336.69px;font-size:8.4px;line-height:11px;height:11px;left:461.5px;width:83px;text-align:center;letter-spacing:0.25px;transform:scaleX(.9);-webkit-text-stroke:.3px #000;">COUNT</div>
<div class="t sans" style="top:336.69px;font-size:8.4px;line-height:11px;height:11px;left:504.5px;width:115px;text-align:center;letter-spacing:0.25px;transform:scaleX(.9);-webkit-text-stroke:.3px #000;">TYPE</div>
<div class="t sans" style="top:336.69px;font-size:8.4px;line-height:11px;height:11px;left:579.5px;width:83px;text-align:center;letter-spacing:0.25px;transform:scaleX(.9);-webkit-text-stroke:.3px #000;">COUNT</div>
<div class="r" style="left:406px;top:360px;width:237px;height:1px;background:#000"></div>
<div class="r" style="left:407px;top:361px;width:235px;height:13px;background:#f6f6fe"></div>
<div class="r" style="left:406px;top:374px;width:237px;height:1px;background:#000"></div>
<div class="r" style="left:406px;top:388px;width:237px;height:1px;background:#000"></div>
<div class="r" style="left:407px;top:389px;width:235px;height:13px;background:#f6f6fe"></div>
<div class="r" style="left:406px;top:402px;width:237px;height:1px;background:#000"></div>
<div class="r" style="left:406px;top:326px;width:1px;height:77px;background:#000"></div>
<div class="r" style="left:642px;top:326px;width:1px;height:91px;background:#000"></div>
<div class="r" style="left:524px;top:416px;width:119px;height:1px;background:#000"></div>
<div class="r" style="left:599px;top:402px;width:1px;height:15px;background:#000"></div>
<div class="t sans" style="top:404.19px;font-size:8.4px;line-height:11px;height:11px;left:504.5px;width:115px;text-align:center;letter-spacing:0.25px;transform:scaleX(.9);-webkit-text-stroke:.3px #000;">OPENINGS</div>
<div class="t mono" style="top:348.38px;font-size:12.1px;line-height:16px;height:16px;left:408px;letter-spacing:0.14px;">FULLBATH</div>
<div class="t mono" style="top:348.38px;font-size:12.1px;line-height:16px;height:16px;left:118px;width:400px;text-align:right;letter-spacing:0.14px;">1</div>
<div class="t mono" style="top:362.38px;font-size:12.1px;line-height:16px;height:16px;left:407px;letter-spacing:0.14px;">HALFBATH</div>
<div class="t mono" style="top:362.38px;font-size:12.1px;line-height:16px;height:16px;left:118px;width:400px;text-align:right;letter-spacing:0.14px;">1</div>
<div class="r" style="left:524px;top:326px;width:1px;height:91px;background:#000"></div>
<div class="r" style="left:404px;top:0px;width:644px;height:1px;background:#000"></div>
<div class="r" style="left:644px;top:0px;width:1px;height:593px;background:#000"></div>
<div class="r" style="left:1047px;top:0px;width:1px;height:589px;background:#000"></div>
<div class="r" style="left:644px;top:543px;width:404px;height:1px;background:#000"></div>
<div class="r" style="left:645px;top:544px;width:402px;height:14px;background:#add8e6"></div>
<div class="r" style="left:645px;top:558px;width:402px;height:15px;background:#ffb6c1"></div>
<div class="r" style="left:645px;top:573px;width:402px;height:15px;background:#d3d3d3"></div>
<div class="r" style="left:644px;top:588px;width:404px;height:1px;background:#000"></div>
<div class="t mono" style="top:542.09px;font-size:12.8px;line-height:17px;height:17px;left:646px;font-weight:bold;-webkit-text-stroke:.2px currentColor;color:#2a2a2a;letter-spacing:0.54px;white-space:pre;">A.0  1    SR42U26L42D26.</div>
<div class="t mono" style="top:557.09px;font-size:12.8px;line-height:17px;height:17px;left:646px;font-weight:bold;-webkit-text-stroke:.2px currentColor;color:#2a2a2a;letter-spacing:0.54px;white-space:pre;">B.0  113  U26R42SR14D8L14U8.</div>
<div class="t mono" style="top:571.59px;font-size:12.8px;line-height:17px;height:17px;left:646px;font-weight:bold;-webkit-text-stroke:.2px currentColor;color:#2a2a2a;letter-spacing:0.54px;white-space:pre;">C.0  104  U26R42D26SR14U18L14D18.</div>
<div class="r" style="left:669px;top:354px;width:354px;height:164px;background:#333"></div>
<div class="r" style="left:670px;top:355px;width:264px;height:162px;background:#add8e6"></div>
<div class="r" style="left:935px;top:355px;width:87px;height:49px;background:#ffb6c1"></div>
<div class="r" style="left:935px;top:405px;width:87px;height:112px;background:#d3d3d3"></div>
<div class="t sans" style="top:355.46px;font-size:13.4px;line-height:17px;height:17px;left:772.0px;width:60px;text-align:center;color:#2b3440;">42</div>
<div class="t sans" style="top:500.46px;font-size:13.4px;line-height:17px;height:17px;left:772.0px;width:60px;text-align:center;color:#2b3440;">42</div>
<div class="t sans" style="top:427.46px;font-size:13.4px;line-height:17px;height:17px;left:650.0px;width:60px;text-align:center;color:#2b3440;">26</div>
<div class="t sans" style="top:427.46px;font-size:13.4px;line-height:17px;height:17px;left:897.0px;width:60px;text-align:center;color:#2b3440;">26</div>
<div class="t sans" style="top:405.46px;font-size:13.4px;line-height:17px;height:17px;left:949.0px;width:60px;text-align:center;color:#2b3440;">14</div>
<div class="t sans" style="top:500.46px;font-size:13.4px;line-height:17px;height:17px;left:949.0px;width:60px;text-align:center;color:#2b3440;">14</div>
<div class="t sans" style="top:452.46px;font-size:13.4px;line-height:17px;height:17px;left:915.0px;width:60px;text-align:center;color:#2b3440;">18</div>
<div class="t sans" style="top:452.46px;font-size:13.4px;line-height:17px;height:17px;left:982.0px;width:60px;text-align:center;color:#2b3440;">18</div>
<div class="t mono" style="top:426.89px;font-size:12.8px;line-height:17px;height:17px;left:732.0px;width:140px;text-align:center;font-weight:bold;-webkit-text-stroke:.2px currentColor;color:#2a2a2a;letter-spacing:0.54px;">A.1</div>
<div class="t mono" style="top:443.89px;font-size:12.8px;line-height:17px;height:17px;left:732.0px;width:140px;text-align:center;font-weight:bold;-webkit-text-stroke:.2px currentColor;color:#2a2a2a;letter-spacing:0.54px;">1092 SqFt</div>
<div class="t mono" style="top:357.99px;font-size:12.8px;line-height:17px;height:17px;left:908.0px;width:140px;text-align:center;font-weight:bold;-webkit-text-stroke:.2px currentColor;color:#2a2a2a;letter-spacing:0.54px;">B.113</div>
<div class="t mono" style="top:375.99px;font-size:12.8px;line-height:17px;height:17px;left:908.0px;width:140px;text-align:center;font-weight:bold;-webkit-text-stroke:.2px currentColor;color:#2a2a2a;letter-spacing:0.54px;">112 SqFt</div>
<div class="t mono" style="top:479.99px;font-size:12.8px;line-height:17px;height:17px;left:908.0px;width:140px;text-align:center;font-weight:bold;-webkit-text-stroke:.2px currentColor;color:#2a2a2a;letter-spacing:0.54px;">C.104</div>
<div class="r" style="left:644px;top:592px;width:201px;height:1px;background:#000"></div>
<div class="r" style="left:645px;top:593px;width:199px;height:9px;background:#add8e6"></div>
<div class="r" style="left:644px;top:602px;width:201px;height:1px;background:#000"></div>
<div class="r" style="left:644px;top:617px;width:201px;height:1px;background:#000"></div>
<div class="r" style="left:744px;top:592px;width:1px;height:26px;background:#000"></div>
<div class="r" style="left:844px;top:592px;width:1px;height:26px;background:#000"></div>
<div class="r" style="left:644px;top:592px;width:1px;height:26px;background:#000"></div>
<div class="t sans" style="top:592.69px;font-size:8.4px;line-height:11px;height:11px;left:624.5px;width:140px;text-align:center;letter-spacing:0.25px;transform:scaleX(.9);-webkit-text-stroke:.3px #000;">PRINT DATE</div>
<div class="t sans" style="top:592.69px;font-size:8.4px;line-height:11px;height:11px;left:724.5px;width:140px;text-align:center;letter-spacing:0.25px;transform:scaleX(.9);-webkit-text-stroke:.3px #000;">LAST SAVED</div>
<div class="t mono" style="top:603.88px;font-size:12.1px;line-height:16px;height:16px;left:494.5px;width:400px;text-align:center;letter-spacing:0.14px;">10/26/2023</div>
<div class="t mono" style="top:603.88px;font-size:12.1px;line-height:16px;height:16px;left:593.7px;width:400px;text-align:center;letter-spacing:0.14px;">10/4/2019</div>
<div class="r" style="left:847px;top:592px;width:201px;height:1px;background:#000"></div>
<div class="r" style="left:848px;top:593px;width:199px;height:9px;background:#add8e6"></div>
<div class="r" style="left:847px;top:602px;width:201px;height:1px;background:#000"></div>
<div class="t sans" style="top:592.69px;font-size:8.4px;line-height:11px;height:11px;left:827.5px;width:240px;text-align:center;letter-spacing:0.25px;transform:scaleX(.9);-webkit-text-stroke:.3px #000;">BUILDING VALUE SUMMARY</div>
<div class="r" style="left:848px;top:617px;width:199px;height:13px;background:#f6f6fe"></div>
<div class="r" style="left:848px;top:645px;width:199px;height:13px;background:#f6f6fe"></div>
<div class="r" style="left:847px;top:616px;width:201px;height:1px;background:#000"></div>
<div class="r" style="left:847px;top:630px;width:100px;height:1px;background:#000"></div>
<div class="r" style="left:847px;top:644px;width:201px;height:1px;background:#000"></div>
<div class="r" style="left:847px;top:658px;width:100px;height:1px;background:#000"></div>
<div class="r" style="left:847px;top:672px;width:201px;height:1px;background:#000"></div>
<div class="r" style="left:947px;top:629px;width:101px;height:3px;background:#000"></div>
<div class="r" style="left:947px;top:657px;width:101px;height:3px;background:#000"></div>
<div class="r" style="left:847px;top:592px;width:1px;height:81px;background:#000"></div>
<div class="r" style="left:1047px;top:592px;width:1px;height:81px;background:#000"></div>
<div class="r" style="left:946px;top:602px;width:2px;height:71px;background:#000"></div>
<div class="t mono" style="top:605.07px;font-size:9.5px;line-height:12px;height:12px;left:849px;font-weight:bold;">RPCN</div>
<div class="t mono" style="top:602.88px;font-size:12.1px;line-height:16px;height:16px;left:645px;width:400px;text-align:right;letter-spacing:0.14px;">$94,672</div>
<div class="t mono" style="top:619.07px;font-size:9.5px;line-height:12px;height:12px;left:849px;font-weight:bold;">DEP</div>
<div class="t mono" style="top:616.88px;font-size:12.1px;line-height:16px;height:16px;left:950px;letter-spacing:0.14px;">–</div>
<div class="t mono" style="top:616.88px;font-size:12.1px;line-height:16px;height:16px;left:645px;width:400px;text-align:right;letter-spacing:0.14px;">$38,816</div>
<div class="t mono" style="top:633.07px;font-size:9.5px;line-height:12px;height:12px;left:849px;font-weight:bold;">RCLND</div>
<div class="t mono" style="top:630.88px;font-size:12.1px;line-height:16px;height:16px;left:645px;width:400px;text-align:right;letter-spacing:0.14px;">$55,856</div>
<div class="t mono" style="top:647.07px;font-size:9.5px;line-height:12px;height:12px;left:849px;font-weight:bold;">OBS F/E</div>
<div class="t mono" style="top:644.88px;font-size:12.1px;line-height:16px;height:16px;left:950px;letter-spacing:0.14px;">–</div>
<div class="t mono" style="top:644.88px;font-size:12.1px;line-height:16px;height:16px;left:645px;width:400px;text-align:right;letter-spacing:0.14px;">$0</div>
<div class="t mono" style="top:661.07px;font-size:9.5px;line-height:12px;height:12px;left:849px;font-weight:bold;">LCF</div>
<div class="t mono" style="top:658.88px;font-size:12.1px;line-height:16px;height:16px;left:645px;width:400px;text-align:right;letter-spacing:0.14px;">$55,856</div>
<div class="t mono" style="top:658.88px;font-size:12.1px;line-height:16px;height:16px;left:544px;width:400px;text-align:right;letter-spacing:0.14px;">100%</div>
<div class="r" style="left:847px;top:681px;width:201px;height:1px;background:#000"></div>
<div class="r" style="left:848px;top:682px;width:199px;height:19px;background:#ffff00"></div>
<div class="r" style="left:847px;top:701px;width:201px;height:1px;background:#000"></div>
<div class="t mono" style="top:683.89px;font-size:12.8px;line-height:17px;height:17px;left:747.0px;width:400px;text-align:center;font-weight:bold;-webkit-text-stroke:.2px currentColor;color:#111;letter-spacing:0.54px;">PARCEL SUMMARY</div>
<div class="r" style="left:848px;top:716px;width:199px;height:13px;background:#f6f6fe"></div>
<div class="r" style="left:848px;top:744px;width:199px;height:13px;background:#f6f6fe"></div>
<div class="r" style="left:848px;top:758px;width:199px;height:13px;background:#f6f6fe"></div>
<div class="r" style="left:847px;top:715px;width:201px;height:1px;background:#000"></div>
<div class="r" style="left:847px;top:729px;width:201px;height:1px;background:#000"></div>
<div class="r" style="left:847px;top:743px;width:100px;height:1px;background:#000"></div>
<div class="r" style="left:847px;top:757px;width:201px;height:1px;background:#000"></div>
<div class="r" style="left:847px;top:771px;width:100px;height:1px;background:#000"></div>
<div class="r" style="left:947px;top:742px;width:101px;height:3px;background:#000"></div>
<div class="r" style="left:947px;top:770px;width:101px;height:3px;background:#000"></div>
<div class="r" style="left:946px;top:701px;width:2px;height:72px;background:#000"></div>
<div class="t mono" style="top:704.07px;font-size:9.5px;line-height:12px;height:12px;left:849px;font-weight:bold;">TOTAL BLDG VALUE</div>
<div class="t mono" style="top:701.88px;font-size:12.1px;line-height:16px;height:16px;left:645px;width:400px;text-align:right;letter-spacing:0.14px;">$55,856</div>
<div class="t mono" style="top:718.07px;font-size:9.5px;line-height:12px;height:12px;left:849px;font-weight:bold;">OBLDG VALUE</div>
<div class="t mono" style="top:715.88px;font-size:12.1px;line-height:16px;height:16px;left:949px;letter-spacing:0.14px;">+</div>
<div class="t mono" style="top:715.88px;font-size:12.1px;line-height:16px;height:16px;left:645px;width:400px;text-align:right;letter-spacing:0.14px;">$1,300</div>
<div class="t mono" style="top:732.07px;font-size:9.5px;line-height:12px;height:12px;left:849px;font-weight:bold;">LAND VALUE</div>
<div class="t mono" style="top:729.88px;font-size:12.1px;line-height:16px;height:16px;left:949px;letter-spacing:0.14px;">+</div>
<div class="t mono" style="top:729.88px;font-size:12.1px;line-height:16px;height:16px;left:645px;width:400px;text-align:right;letter-spacing:0.14px;">$65,753</div>
<div class="t mono" style="top:746.07px;font-size:9.5px;line-height:12px;height:12px;left:849px;font-weight:bold;">APPRAISED VALUE</div>
<div class="t mono" style="top:743.88px;font-size:12.1px;line-height:16px;height:16px;left:645px;width:400px;text-align:right;letter-spacing:0.14px;">$122,910</div>
<div class="t mono" style="top:760.07px;font-size:9.5px;line-height:12px;height:12px;left:849px;font-weight:bold;">DEFERRED VALUE</div>
<div class="t mono" style="top:757.88px;font-size:12.1px;line-height:16px;height:16px;left:949px;letter-spacing:0.14px;">–</div>
<div class="t mono" style="top:757.88px;font-size:12.1px;line-height:16px;height:16px;left:645px;width:400px;text-align:right;letter-spacing:0.14px;">$0</div>
<div class="r" style="left:903px;top:773px;width:144px;height:25px;background:#ffff00"></div>
<div class="r" style="left:902px;top:772px;width:1px;height:27px;background:#000"></div>
<div class="r" style="left:847px;top:798px;width:201px;height:1px;background:#000"></div>
<div class="r" style="left:847px;top:681px;width:1px;height:118px;background:#000"></div>
<div class="r" style="left:1047px;top:681px;width:1px;height:118px;background:#000"></div>
<div class="t mono" style="top:774.07px;font-size:9.5px;line-height:12px;height:12px;left:844.0px;width:60px;text-align:center;font-weight:bold;">TAXABLE</div>
<div class="t mono" style="top:784.57px;font-size:9.5px;line-height:12px;height:12px;left:844.0px;width:60px;text-align:center;font-weight:bold;">VALUE</div>
<div class="t sans" style="top:773.07px;font-size:20px;line-height:26px;height:26px;left:647px;width:400px;text-align:right;font-weight:bold;color:#e01010;">$122,910</div>
<svg class="r" style="left:405px;top:1px" width="239" height="180" viewBox="405 1 239 180">
<defs>
<filter id="b1" x="-10%" y="-10%" width="120%" height="120%"><feGaussianBlur stdDeviation="1.2"/></filter>
<filter id="b2" x="-10%" y="-10%" width="120%" height="120%"><feGaussianBlur stdDeviation="2.2"/></filter>
<clipPath id="c1"><rect x="405" y="1" width="119" height="89"/></clipPath>
<clipPath id="c2"><rect x="525" y="1" width="119" height="89"/></clipPath>
<clipPath id="c3"><rect x="405" y="91" width="119" height="90"/></clipPath>
<clipPath id="c4"><rect x="525" y="91" width="119" height="90"/></clipPath>
<linearGradient id="g1" x1="0" y1="0" x2="0" y2="1"><stop offset="0" stop-color="#8f9858"/><stop offset="0.25" stop-color="#b4ae68"/><stop offset="0.6" stop-color="#b2bc62"/><stop offset="1" stop-color="#a9b468"/></linearGradient>
<linearGradient id="g2" x1="0" y1="0" x2="0" y2="1"><stop offset="0" stop-color="#b4a27c"/><stop offset="0.35" stop-color="#c6cc7a"/><stop offset="1" stop-color="#bcc66e"/></linearGradient>
<linearGradient id="g4" x1="0" y1="0" x2="0" y2="1"><stop offset="0" stop-color="#d4e0b4"/><stop offset="0.35" stop-color="#a8c07c"/><stop offset="0.7" stop-color="#b6d084"/><stop offset="1" stop-color="#b2d080"/></linearGradient>
</defs>
<rect x="405" y="1" width="239" height="180" fill="#e8ecd8"/>
<!-- photo 1 -->
<g clip-path="url(#c1)"><g filter="url(#b1)">
<rect x="400" y="-4" width="130" height="56" fill="#38553a"/>
<rect x="440" y="0" width="20" height="22" fill="#4f6f4c"/>
<rect x="486" y="2" width="40" height="20" fill="#47664a"/>
<rect x="400" y="47" width="130" height="46" fill="url(#g1)"/>
<rect x="417" y="26" width="38" height="20" fill="#c9d6e6"/>
<polygon points="425,24 455,24 455,34 418,35" fill="#9c9eb4"/>
<rect x="484" y="30" width="28" height="15" fill="#b8c8dc"/>
<polygon points="484,22 503,21 513,31 484,33" fill="#a2a4b8"/>
<rect x="416" y="28" width="9" height="20" fill="#bcd0ea"/>
<ellipse cx="470" cy="28" rx="15" ry="22" fill="#1f3a26"/>
<rect x="414" y="2" width="2" height="46" fill="#1c2a20"/><rect x="425" y="2" width="3" height="46" fill="#1c2a20"/>
<rect x="439" y="2" width="2" height="42" fill="#1c2a20"/><rect x="451" y="2" width="3" height="44" fill="#1c2a20"/>
<rect x="428" y="42" width="27" height="6" fill="#1c2838"/>
<rect x="500" y="40" width="12" height="5" fill="#2a3c5c"/>
<rect x="405" y="38" width="11" height="11" fill="#2c4630"/>
</g></g>
<!-- photo 2 -->
<g clip-path="url(#c2)"><g filter="url(#b1)">
<rect x="520" y="-4" width="130" height="72" fill="#4f7a40"/>
<rect x="560" y="-2" width="50" height="12" fill="#2f5232"/>
<rect x="528" y="1" width="30" height="8" fill="#3a5e38"/>
<rect x="575" y="20" width="22" height="14" fill="#35583a"/>
<rect x="524" y="10" width="10" height="50" fill="#8fb070"/>
<rect x="600" y="-2" width="50" height="20" fill="#6f8f6c"/>
<rect x="605" y="1" width="8" height="18" fill="#d4e0dc"/>
<rect x="622" y="1" width="22" height="6" fill="#d8e2e0"/>
<rect x="620" y="22" width="24" height="38" fill="#7a9c64"/>
<rect x="540" y="10" width="36" height="24" fill="#6a9a48"/>
<rect x="520" y="61" width="130" height="8" fill="#8c7a58"/>
<rect x="520" y="67" width="130" height="26" fill="url(#g2)"/>
<rect x="546" y="40" width="56" height="20" fill="#b4bcc8"/>
<polygon points="546,38 562,38 602,30 602,42 546,43" fill="#c2c6c8"/>
<rect x="546" y="37" width="16" height="4" fill="#a0584a"/>
<rect x="578" y="36" width="24" height="24" fill="#c0c0b4"/>
<rect x="532" y="8" width="4" height="56" fill="#26382a"/>
<rect x="539" y="34" width="4" height="30" fill="#26382a"/>
<rect x="586" y="30" width="5" height="34" fill="#243428"/>
<rect x="600" y="10" width="6" height="54" fill="#24342a"/>
<rect x="614" y="1" width="6" height="62" fill="#22322a"/>
<rect x="621" y="1" width="3" height="62" fill="#22322a"/>
<rect x="630" y="1" width="5" height="61" fill="#22322a"/>
<rect x="608" y="53" width="36" height="8" fill="#5a4030"/>
</g></g>
<!-- photo 3 -->
<g clip-path="url(#c3)"><g filter="url(#b1)">
<rect x="400" y="88" width="130" height="96" fill="#6c7f70"/>
<rect x="400" y="88" width="80" height="20" fill="#4e6050"/>
<polygon points="405,112 478,98 505,118 475,120 475,156 405,156" fill="#6f7d76"/>
<rect x="405" y="112" width="20" height="44" fill="#667a72"/>
<rect x="483" y="91" width="34" height="30" fill="#6c9858"/>
<rect x="475" y="121" width="40" height="34" fill="#5f9440"/>
<rect x="476" y="136" width="8" height="18" fill="#98c050"/>
<rect x="480" y="121" width="3" height="30" fill="#4e5e50"/>
<rect x="470" y="121" width="5" height="36" fill="#4a5a50"/>
<rect x="400" y="155" width="130" height="30" fill="#7d9474"/>
<rect x="474" y="153" width="40" height="12" fill="#c4c8b8"/>
<rect x="405" y="166" width="119" height="16" fill="#86a07a"/>
<rect x="514" y="91" width="9" height="80" fill="#3c4a40"/>
<rect x="495" y="91" width="4" height="8" fill="#d8e4e0"/>
</g></g>
<!-- photo 4 -->
<g clip-path="url(#c4)"><g filter="url(#b1)">
<rect x="520" y="88" width="130" height="70" fill="#3f6240"/>
<rect x="592" y="100" width="22" height="26" fill="#6a9850"/>
<rect x="525" y="100" width="26" height="20" fill="#33513a"/>
<rect x="520" y="150" width="130" height="34" fill="url(#g4)"/>
<polygon points="525,120 546,122 600,126 632,140 600,142 545,140 525,130" fill="#8f9fa0"/>
<rect x="525" y="128" width="21" height="24" fill="#a9c7cc"/>
<rect x="526" y="140" width="18" height="11" fill="#c4d8dc"/>
<rect x="527" y="140" width="2" height="11" fill="#1c2c30"/><rect x="541" y="140" width="2" height="11" fill="#1c2c30"/>
<rect x="576" y="140" width="22" height="12" fill="#2f4636"/>
<rect x="596" y="142" width="14" height="12" fill="#a8bcc4"/>
<rect x="546" y="136" width="14" height="18" fill="#5c9040"/>
<rect x="625" y="130" width="19" height="24" fill="#6a9a50"/>
<rect x="558" y="120" width="6" height="42" fill="#26382c"/>
<rect x="572" y="91" width="4" height="72" fill="#24362a"/>
<rect x="586" y="91" width="5" height="72" fill="#24362a"/>
<rect x="618" y="91" width="5" height="74" fill="#24362a"/>
<rect x="634" y="126" width="3" height="40" fill="#2a3c2e"/>
<rect x="612" y="146" width="4" height="8" fill="#c46a5a"/>
</g></g>
</svg>
<div class="r" style="left:404px;top:180px;width:241px;height:1px;background:#222"></div>
</div></body></html>
